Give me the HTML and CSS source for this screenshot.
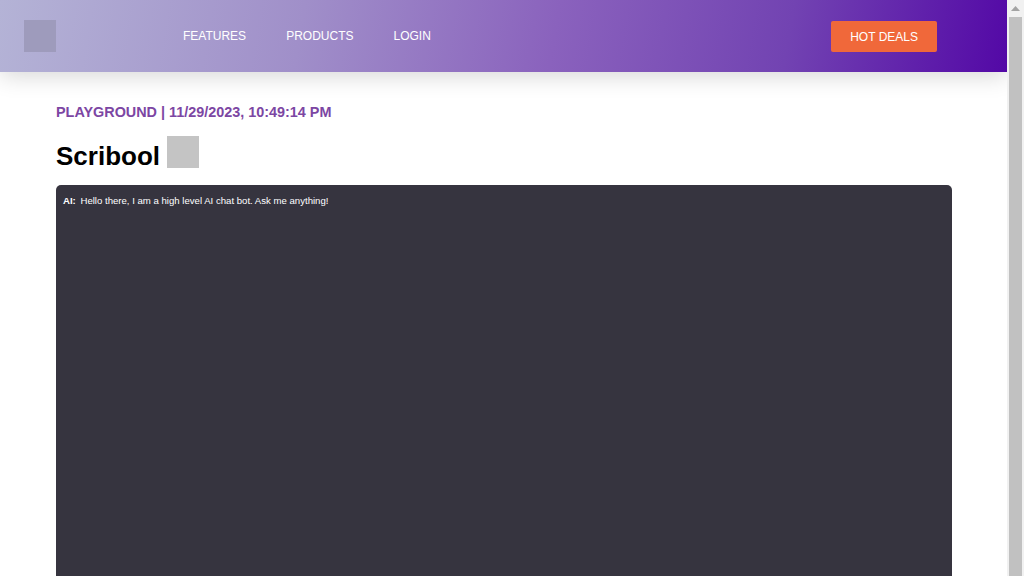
FILE: index.html
```html
<!DOCTYPE html>
<html>
<head>
<meta charset="utf-8">
<link rel="stylesheet" href="styles.css">
</head>
<body>
<div class="page">
  <header class="topbar">
    <div class="logo"></div>
    <nav class="nav">
      <a class="nav-link" href="#">FEATURES</a>
      <a class="nav-link" href="#">PRODUCTS</a>
      <a class="nav-link" href="#">LOGIN</a>
    </nav>
    <a class="deals" href="#">HOT DEALS</a>
  </header>
  <main class="content">
    <div class="crumb">PLAYGROUND | 11/29/2023, 10:49:14 PM</div>
    <div class="title-row">
      <h1 class="title">Scribool</h1>
      <div class="title-icon"></div>
    </div>
    <section class="chat">
      <p class="msg"><b class="who">AI:</b> Hello there, I am a high level AI chat bot. Ask me anything!</p>
    </section>
  </main>
</div>
<div class="scrollbar">
  <div class="scroll-up">
    <svg width="9" height="5" viewBox="0 0 9 5"><path d="M0 5 L4.5 0 L9 5 Z" fill="#a3a3a3"/></svg>
  </div>
  <div class="scroll-thumb"></div>
</div>
</body>
</html>
```
FILE: styles.css
```css
html, body {
  margin: 0;
  padding: 0;
}
body {
  font-family: "Liberation Sans", Arial, sans-serif;
  background: #ffffff;
  color: #000;
  display: flex;
  align-items: flex-start;
}
.page {
  flex: 1;
  min-width: 0;
}
.scrollbar {
  flex: none;
  width: 17px;
  height: 100vh;
  position: sticky;
  top: 0;
  background: #f1f1f1;
  display: flex;
  flex-direction: column;
  align-items: center;
}
.scroll-up {
  height: 17px;
  display: flex;
  align-items: center;
  justify-content: center;
}
.scroll-up svg {
  display: block;
}
.scroll-thumb {
  width: 13px;
  flex: 1;
  background: #c1c1c1;
}
.topbar {
  height: 72px;
  display: flex;
  align-items: flex-start;
  padding: 0 70px 0 24px;
  background: linear-gradient(100deg, #b4b3d6 0%, #a08fc9 30%, #8a62bd 55%, #7243b2 78%, #5308a6 100%);
  box-shadow: 0 4px 22px rgba(0, 0, 0, 0.16);
  position: relative;
}
.logo {
  width: 32px;
  height: 32px;
  background: #9e9bbc;
  margin-top: 20px;
}
.nav {
  display: flex;
  gap: 40px;
  margin-left: 127px;
  margin-top: 29px;
}
.nav-link {
  color: #ffffff;
  text-decoration: none;
  font-size: 12px;
  line-height: 15px;
}
.deals {
  margin-left: auto;
  margin-top: 21px;
  height: 31px;
  box-sizing: border-box;
  padding: 1px 19px 0;
  display: flex;
  align-items: center;
  background: #f0683a;
  color: #fff;
  text-decoration: none;
  font-size: 12px;
  border-radius: 2px;
}
.content {
  padding: 32px 55px 0 56px;
}
.crumb {
  color: #7c46a3;
  font-weight: bold;
  font-size: 14.4px;
  line-height: 16px;
}
.title-row {
  display: flex;
  align-items: flex-start;
  gap: 7px;
  margin-top: 16px;
}
.title {
  margin: 0;
  padding-top: 4px;
  font-size: 26px;
  line-height: 32px;
  font-weight: bold;
}
.title-icon {
  width: 32px;
  height: 32px;
  background: #c4c4c4;
}
.chat {
  margin-top: 13px;
  height: 480px;
  background: #36343f;
  border-radius: 5px;
  padding: 10px 7px;
  box-sizing: border-box;
}
.msg {
  margin: 0;
  color: #ffffff;
  font-size: 9.6px;
  line-height: 11px;
}
.who {
  margin-right: 2px;
}
```
